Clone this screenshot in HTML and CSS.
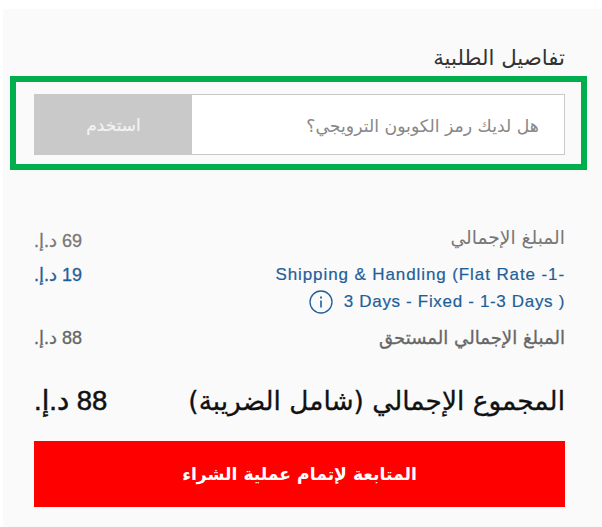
FILE: index.html
```html
<!DOCTYPE html>
<html lang="ar" dir="rtl">
<head>
    <meta charset="UTF-8">
    <meta name="viewport" content="width=device-width, initial-scale=1.0">
    <title>تفاصيل الطلبية</title>
    <link rel="stylesheet" href="styles.css">
</head>
<body>
    <div class="panel">
        <h2 class="panelTitle">تفاصيل الطلبية</h2>

        <!-- coupon -->
        <div class="couponBox">
            <div class="couponForm">
                <div class="couponInput">هل لديك رمز الكوبون الترويجي؟</div>
                <div class="couponBtn">استخدم</div>
            </div>
        </div>

        <!-- totals -->
        <div class="summary">
            <div class="row">
                <span>المبلغ الإجمالي</span>
                <span class="price">69 د.إ.</span>
            </div>
            <div class="row shipping">
                <span class="shipName" dir="ltr">
                    <span>Shipping &amp; Handling (Flat Rate -1-</span>
                    <span class="shipLine2">
                        <svg class="infoIcon" width="24" height="24" viewBox="0 0 24 24" fill="none" stroke="#1f5f99">
                            <circle cx="12" cy="12" r="11" stroke-width="1.3"/>
                            <path d="M12 10.5v7" stroke-width="1.6"/>
                            <path d="M12 6.4v2" stroke-width="1.8"/>
                        </svg>
                        <span class="shipDays">3 Days - Fixed - 1-3 Days )</span>
                    </span>
                </span>
                <span class="price">19 د.إ.</span>
            </div>
            <div class="row due">
                <span>المبلغ الإجمالي المستحق</span>
                <span class="price">88 د.إ.</span>
            </div>
        </div>

        <div class="grandTotal">
            <span>المجموع الإجمالي (شامل الضريبة)</span>
            <span class="grandPrice">88 د.إ.</span>
        </div>

        <a class="checkoutBtn">المتابعة لإتمام عملية الشراء</a>
    </div>
</body>
</html>
```

FILE: styles.css
```css
html, body {
    margin: 0;
    padding: 0;
    background-color: #fff;
}
body {
    font-family: "DejaVu Sans", sans-serif;
    height: 527px;
    overflow: hidden;
}
.panel {
    margin: 9px 0 0 3px;
    height: 518px;
    padding: 37px 37px 0 31px;
    box-sizing: border-box;
    background-color: #fafafa;
}
.panelTitle {
    margin: 0;
    font-size: 21.3px;
    font-weight: normal;
    line-height: 24px;
    color: #333;
}
.couponBox {
    margin: 6px -22px 0 -24px;
    padding: 12px 16px 9px 18px;
    border: 6px solid #00ae4d;
    height: 94px;
    box-sizing: border-box;
}
.couponForm {
    display: flex;
    height: 61px;
    box-sizing: border-box;
    border: 1px solid #c9c9c9;
    background-color: #fff;
}
.couponInput {
    flex: 1;
    display: flex;
    align-items: center;
    padding: 2px 25px 0 0;
    font-size: 17.3px;
    color: #888;
}
.couponBtn {
    width: 157px;
    display: flex;
    align-items: center;
    justify-content: center;
    background-color: #c9c9c9;
    color: #f3f3f3;
    font-size: 17px;
    -webkit-text-stroke: 0.2px #f3f3f3;
}
.summary {
    margin-top: 55px;
    font-size: 18.7px;
    color: #777;
}
.row {
    display: flex;
    justify-content: space-between;
    align-items: flex-start;
    line-height: 26px;
    margin-bottom: 9px;
}
.row:first-child {
    margin-bottom: 8px;
}
.row:first-child .price {
    margin-top: 3px;
}
.shipping {
    color: #1f5f99;
}
.shipName {
    font-family: "Liberation Sans", sans-serif;
    font-size: 17px;
    letter-spacing: 0.9px;
    text-align: right;
    display: flex;
    flex-direction: column;
    align-items: flex-end;
    -webkit-text-stroke: 0.2px #1f5f99;
}
.shipLine2 {
    display: flex;
    align-items: center;
    gap: 11px;
    line-height: 28px;
}
.shipDays {
    letter-spacing: 0.67px;
}
.price {
    font-family: "Liberation Sans", "DejaVu Sans", sans-serif;
    font-size: 18px;
    width: 50px;
    text-align: left;
    -webkit-text-stroke: 0.3px currentColor;
}
.due {
    font-size: 18.1px;
    color: #666;
    -webkit-text-stroke: 0.3px #666;
}
.grandTotal {
    margin-top: 32px;
    display: flex;
    justify-content: space-between;
    align-items: center;
    font-size: 26.4px;
    color: #111;
    line-height: 36px;
    -webkit-text-stroke: 0.3px #111;
}
.grandPrice {
    font-family: "Liberation Sans", "DejaVu Sans", sans-serif;
    font-size: 27.5px;
    -webkit-text-stroke: 0.5px #111;
}
.checkoutBtn {
    display: flex;
    align-items: center;
    justify-content: center;
    height: 66px;
    margin-top: 22px;
    background-color: #ff0000;
    color: #fff;
    font-size: 17.2px;
    font-weight: bold;
}
```
